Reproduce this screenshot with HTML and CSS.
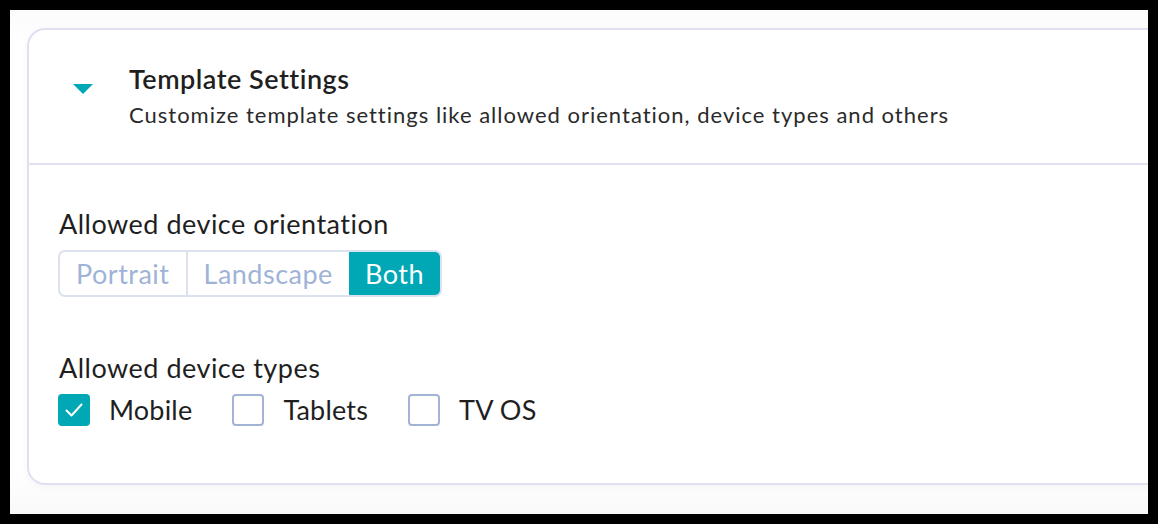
FILE: index.html
```html
<!DOCTYPE html>
<html>
<head>
<meta charset="utf-8">
<link rel="stylesheet" href="styles.css">
</head>
<body>
<div class="frame">
  <section class="card">
    <header class="card-head">
      <span class="caret"></span>
      <div class="head-text">
        <h2 class="title">Template Settings</h2>
        <p class="desc">Customize template settings like allowed orientation, device types and others</p>
      </div>
    </header>
    <div class="card-body">
      <div class="field">
        <div class="label">Allowed device orientation</div>
        <div class="segmented">
          <span class="seg">Portrait</span>
          <span class="seg">Landscape</span>
          <span class="seg active">Both</span>
        </div>
      </div>
      <div class="field">
        <div class="label">Allowed device types</div>
        <div class="checks">
          <label class="check">
            <span class="box checked">
              <svg viewBox="0 0 32 32" width="32" height="32"><path d="M8.5 16.5l5 5L23.5 10.5" fill="none" stroke="#fff" stroke-width="2" stroke-linecap="round" stroke-linejoin="round"/></svg>
            </span>
            <span class="check-text">Mobile</span>
          </label>
          <label class="check">
            <span class="box"></span>
            <span class="check-text">Tablets</span>
          </label>
          <label class="check">
            <span class="box"></span>
            <span class="check-text">TV OS</span>
          </label>
        </div>
      </div>
    </div>
  </section>
</div>
</body>
</html>
```

FILE: styles.css
```css
html, body {
  margin: 0;
  padding: 0;
  background: #000;
}
body {
  padding: 10px;
  width: 1158px;
  height: 524px;
  box-sizing: border-box;
  font-family: "Lato", "Noto Sans", sans-serif;
  color: #1e1e1e;
}
.frame {
  width: 1138px;
  height: 504px;
  background: linear-gradient(#fbfbfb, #ffffff 30px, #ffffff 460px, #f9f9f9);
  overflow: hidden;
  padding: 18px 0 0 17px;
  box-sizing: border-box;
}
.card {
  width: 1200px;
  height: 457px;
  box-sizing: border-box;
  background: #fff;
  border: 2px solid #dfe1f0;
  border-radius: 18px;
  box-shadow: 0 2px 10px rgba(0, 0, 0, 0.04);
}
.card-head {
  display: flex;
  align-items: flex-start;
  height: 135px;
  box-sizing: border-box;
  border-bottom: 2px solid #dfe1f0;
  padding: 34px 0 0 44px;
}
.caret {
  width: 0;
  height: 0;
  border-left: 10px solid transparent;
  border-right: 10px solid transparent;
  border-top: 10px solid #00a7b5;
  margin-top: 20px;
  margin-right: 36px;
}
.title {
  margin: 0;
  font-size: 27px;
  font-weight: 600;
  letter-spacing: 0.5px;
  line-height: 30px;
  color: #1f1f1f;
}
.desc {
  margin: 8px 0 0;
  font-size: 22px;
  letter-spacing: 1px;
  line-height: 26px;
  color: #2a2a2a;
}
.card-body {
  padding: 43px 0 0 30px;
}
.field + .field {
  margin-top: 55px;
}
.label {
  font-size: 27px;
  letter-spacing: 0.5px;
  line-height: 32px;
  color: #1f1f1f;
}
.segmented {
  display: inline-flex;
  margin-top: 10px;
  margin-left: -1px;
  height: 47px;
  border: 2px solid #dbe1ee;
  border-radius: 7px;
  box-sizing: border-box;
  overflow: hidden;
}
.seg {
  display: flex;
  align-items: center;
  padding: 0 16px;
  font-size: 27px;
  letter-spacing: 0.5px;
  color: #9fb3d7;
}
.seg + .seg {
  border-left: 2px solid #dbe1ee;
}
.seg.active {
  background: #00a7b5;
  color: #fff;
  border-left: none;
}
.checks {
  display: flex;
  align-items: center;
  margin-top: 10px;
  margin-left: -1px;
  gap: 40px;
}
.check {
  display: flex;
  align-items: center;
  gap: 19px;
}
.box {
  width: 32px;
  height: 32px;
  box-sizing: border-box;
  border: 2px solid #a2b4d6;
  border-radius: 4px;
  display: block;
}
.box.checked {
  background: #00a7b5;
  border-color: #00a7b5;
}
.box svg {
  display: block;
  margin: -2px;
}
.check-text {
  font-size: 27px;
  letter-spacing: 0.2px;
  line-height: 32px;
  color: #1f1f1f;
}
```
